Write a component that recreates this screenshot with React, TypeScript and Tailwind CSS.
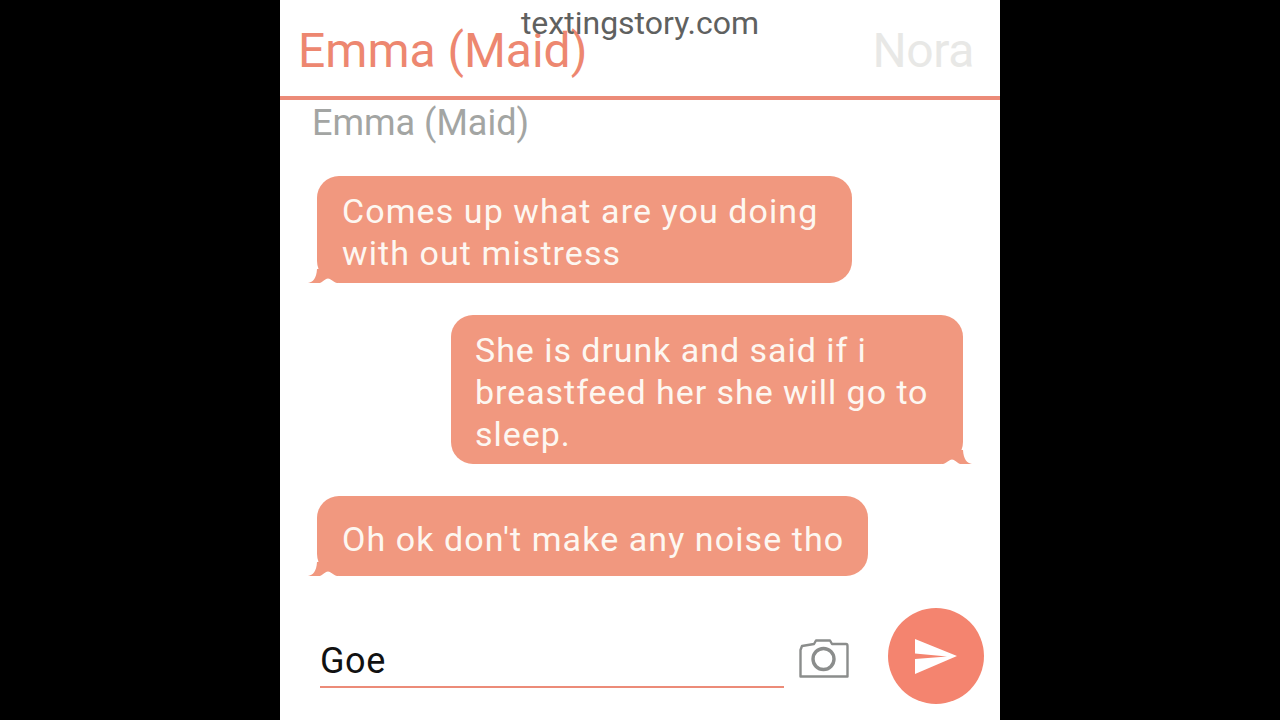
function Tail({ side }: { side: "left" | "right" }) {
  return (
    <svg
      width="30"
      height="14"
      viewBox="0 0 30 14"
      className={side === "left" ? "absolute bottom-0 left-[-9px]" : "absolute bottom-0 right-[-9px] -scale-x-100"}
    >
      <path d="M0 14 C5 13.500 8.500 9 9 0 L30 0 L30 14 Z" fill="#f1987f" />
      <path d="M11 14.200 C15 13.500 17 9.500 20 9.500 C23 9.500 25 13.500 30 14.200 Z" fill="#ffffff" />
    </svg>
  );
}

function Bubble({ side, className, lines }: { side: "left" | "right"; className: string; lines: string[] }) {
  return (
    <div className={`relative rounded-[22px] bg-[#f1987f] text-[34px] leading-[42px] text-[#fdf7f1] ${className}`}>
      {lines.map((l) => (
        <div key={l} className="whitespace-nowrap">{l}</div>
      ))}
      <Tail side={side} />
    </div>
  );
}

export default function App() {
  return (
    <div className="flex h-[720px] w-full justify-center overflow-hidden bg-black font-['Roboto',sans-serif]">
      <div className="relative flex h-[720px] w-[720px] flex-col bg-white">
        <div className="absolute left-0 right-0 top-[4px] text-center text-[32px] leading-[38px] text-[#5f6160]">
          textingstory.com
        </div>
        <div className="flex h-[100px] shrink-0 items-start justify-between border-b-4 border-[#ec8b78] pl-[18px] pr-[26px] pt-[22px] text-[48px] leading-[58px]">
          <span className="text-[#ed8770]">Emma (Maid)</span>
          <span className="tracking-[-0.4px] text-[#e8e8e6]">Nora</span>
        </div>
        <div className="pl-[32px] pt-[3px] text-[36px] leading-[40px] text-[#a3a5a3]">Emma (Maid)</div>
        <div className="flex flex-col">
          <Bubble side="left" className="ml-[37px] mt-[33px] h-[107px] w-[535px] pl-[25px] pt-[14px] tracking-[1.08px]" lines={["Comes up what are you doing", "with out mistress"]} />
          <Bubble side="right" className="ml-[171px] mt-[32px] h-[149px] w-[512px] pl-[24px] pt-[14px] tracking-[0.95px]" lines={["She is drunk and said if i", "breastfeed her she will go to", "sleep."]} />
          <Bubble side="left" className="ml-[37px] mt-[32px] h-[80px] w-[551px] pl-[25px] pt-[22px] tracking-[1.08px]" lines={["Oh ok don't make any noise tho"]} />
        </div>
        <div className="mt-[32px] flex items-start pl-[40px]">
          <div className="mt-[28px] h-[52px] w-[464px] border-b-2 border-[#ec8b78] pt-[2px] text-[36px] leading-[46px] tracking-[0.6px] text-[#111]">Goe</div>
          <svg width="50" height="40" viewBox="0 0 50 40" fill="none" stroke="#8b8d8c" strokeWidth="2.400" className="ml-[15px] mt-[30px]">
            <path d="M1.500 38.500 V12 L3 8 L15 6 L17 2.500 H31 L33 6 H47 C48 6 48.500 7 48.500 8 V38.500 H1.500 Z" strokeLinejoin="round" />
            <circle cx="24.500" cy="21" r="10.500" strokeWidth="3.400" />
          </svg>
          <div className="ml-[39px] mt-0 flex h-[96px] w-[96px] items-center justify-center rounded-full bg-[#f4846f]">
            <svg width="42" height="35" viewBox="0 0 42 35">
              <path d="M0 0 L42 17 L0 35 V20 L32 17.500 L0 14.500 Z" fill="#fff" />
            </svg>
          </div>
        </div>
      </div>
    </div>
  );
}
